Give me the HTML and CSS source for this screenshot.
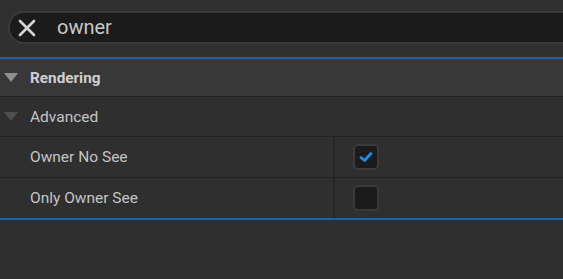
FILE: index.html
```html
<!DOCTYPE html>
<html>
<head>
<meta charset="utf-8">
<link rel="stylesheet" href="styles.css">
</head>
<body>
<div class="panel">
  <div class="search-area">
    <div class="search">
      <svg class="clear" width="18" height="18" viewBox="0 0 18 18"><path d="M2 2 L16 16 M16 2 L2 16" stroke="#d6d6d6" stroke-width="2.6" stroke-linecap="round"/></svg>
      <span class="query">owner</span>
    </div>
  </div>
  <div class="accent"></div>
  <div class="category">
    <span class="arrow light"></span>
    <span class="cat-label">Rendering</span>
  </div>
  <div class="sub">
    <span class="arrow dark"></span>
    <span class="sub-label">Advanced</span>
  </div>
  <div class="prop">
    <div class="name">Owner No See</div>
    <div class="value">
      <span class="check on">
        <svg width="14" height="12" viewBox="0 0 14 12"><path d="M2 6.5 L5.5 9.5 L12 2.5" fill="none" stroke="#1b8fe8" stroke-width="2.8" stroke-linecap="round" stroke-linejoin="round"/></svg>
      </span>
    </div>
  </div>
  <div class="prop last">
    <div class="name">Only Owner See</div>
    <div class="value"><span class="check"></span></div>
  </div>
  <div class="accent"></div>
</div>
</body>
</html>
```
FILE: styles.css
```css
html, body {
  margin: 0;
  padding: 0;
  background: #2f2f2f;
  font-family: Roboto, "Noto Sans", sans-serif;
}
.panel {
  width: 563px;
}
.search-area {
  height: 57px;
  padding: 11px 0 0 8px;
  box-sizing: border-box;
  background: #303030;
}
.search {
  height: 33px;
  box-sizing: border-box;
  background: #1b1b1b;
  border: 2px solid #3a3a3a;
  border-right: none;
  border-radius: 16px 0 0 16px;
  display: flex;
  align-items: center;
  padding-left: 8px;
}
.clear {
  display: block;
}
.query {
  margin-left: 21px;
  font-size: 20px;
  color: #c8c8c8;
  line-height: 22px;
  position: relative;
  top: -1px;
}
.accent {
  height: 2px;
  background: #1a63a8;
}
.category {
  height: 37px;
  background: #383838;
  border-bottom: 1px solid #222;
  display: flex;
  align-items: center;
}
.arrow {
  width: 0;
  height: 0;
  border-left: 7px solid transparent;
  border-right: 7px solid transparent;
  margin-left: 4px;
  margin-right: 12px;
}
.arrow.light {
  border-top: 9px solid #8f8f8f;
}
.arrow.dark {
  border-top: 9px solid #4f4f4f;
}
.cat-label {
  font-weight: bold;
  font-size: 15.3px;
  color: #cfcfcf;
}
.sub {
  height: 39px;
  background: #2f2f2f;
  border-bottom: 1px solid #222;
  display: flex;
  align-items: center;
}
.sub-label {
  font-size: 15.5px;
  color: #c4c4c4;
}
.prop {
  height: 40px;
  display: flex;
  background: #2f2f2f;
  border-bottom: 1px solid #242424;
}
.prop.last {
  border-bottom: none;
}
.name {
  width: 335px;
  border-right: 2px solid #252525;
  display: flex;
  align-items: center;
  padding-left: 30px;
  box-sizing: border-box;
  font-size: 15.5px;
  color: #c4c4c4;
}
.value {
  flex: 1;
  display: flex;
  align-items: center;
  padding-left: 18px;
}
.check {
  width: 26px;
  height: 26px;
  box-sizing: border-box;
  border: 2px solid #3a3a3a;
  border-radius: 5px;
  background: #1b1b1b;
  display: flex;
  align-items: center;
  justify-content: center;
}
```
